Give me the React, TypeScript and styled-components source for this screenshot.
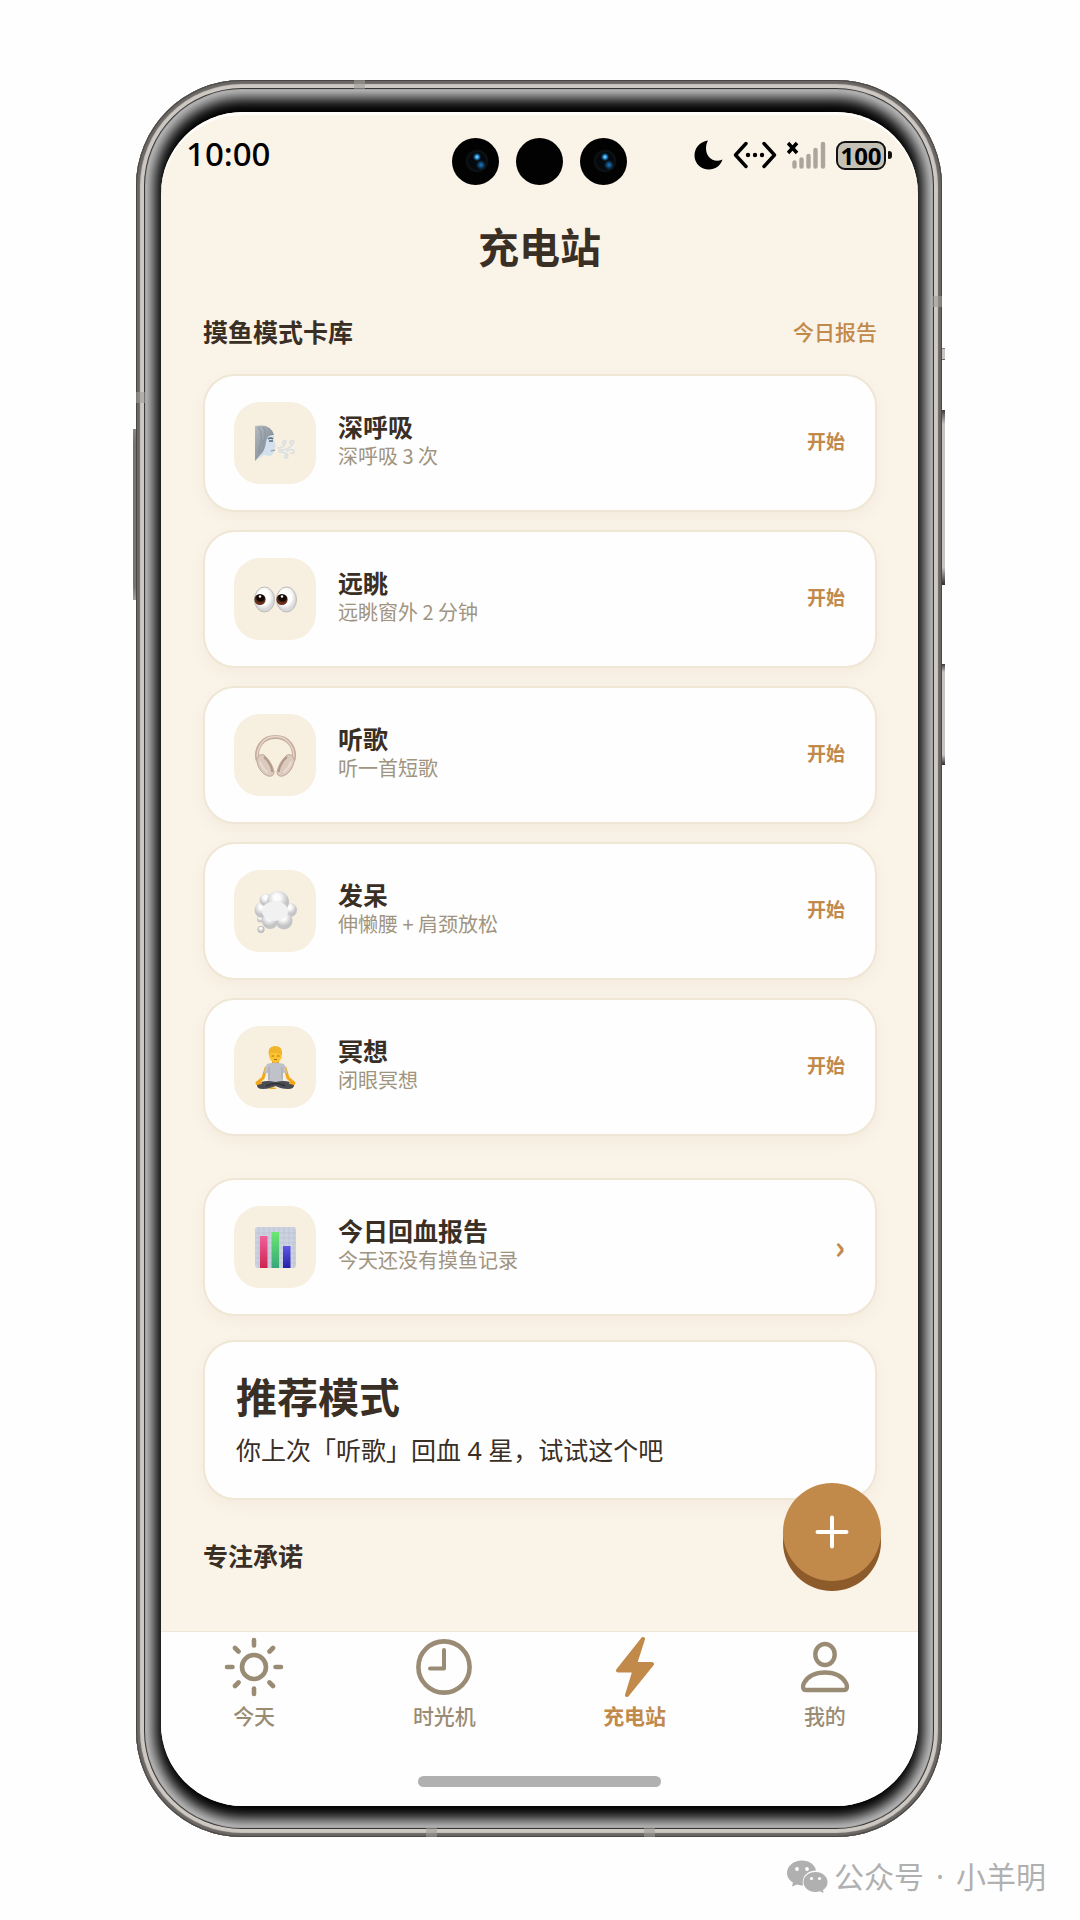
import React from 'react';
import styled, { createGlobalStyle, css } from 'styled-components';

const color = {
  page: '#fefefe',
  paper: '#faf3e8',
  card: '#fefefe',
  line: '#efe6d5',
  tile: '#f7efdf',
  ink: '#3a2f24',
  muted: '#a09480',
  tab: '#9a8c74',
  accent: '#c1894a',
  accentDark: '#8d5a2a',
};

const GlobalStyle = createGlobalStyle`
  *, *::before, *::after { box-sizing: border-box; }
  body {
    margin: 0;
    background: ${color.page};
    color: ${color.ink};
    font-family: "Noto Sans CJK SC", "Noto Sans", sans-serif;
  }
  h1, h2, h3, p, ul { margin: 0; padding: 0; }
  button { border: 0; padding: 0; background: none; font-family: inherit; cursor: pointer; }
  a { color: inherit; text-decoration: none; }
  svg { display: block; flex: none; }
`;

const Stage = styled.div`
  display: flex;
  flex-direction: column;
  padding: 80px 34px 0 0;
`;

const Phone = styled.div`
  position: relative;
  margin: 0 104px 0 136px;
  padding: 32px 24px 31px 25px;
  border-radius: 106px;
  background: #000;
  box-shadow:
    inset 0 0 0 1px #4a4744,
    inset 0 0 1px 4px #6a6663,
    inset 0 0 0 8px #cdc8c2,
    inset 0 0 1px 9px #2b2928,
    inset 0 0 14px 18px #c8c8c8;
`;

const SideKey = styled.i<{ $side: 'left' | 'right'; $top: number; $length: number }>`
  position: absolute;
  top: ${(p) => p.$top}px;
  ${(p) => p.$side}: -3px;
  width: 3px;
  height: ${(p) => p.$length}px;
  background: ${(p) =>
    p.$side === 'left'
      ? 'linear-gradient(#8a8682, #77736f 8% 92%, #a5a09b)'
      : 'linear-gradient(#3d3b3a, #c8c4c0 8% 90%, #2d2b2a)'};
`;

const Antenna = styled.i<{ $x: string; $y: string; $flat?: boolean }>`
  position: absolute;
  left: ${(p) => p.$x};
  top: ${(p) => p.$y};
  width: ${(p) => (p.$flat ? 11 : 9)}px;
  height: ${(p) => (p.$flat ? 9 : 11)}px;
  background: rgba(160, 156, 152, 0.6);
`;

const Screen = styled.div`
  display: flex;
  flex-direction: column;
  overflow: hidden;
  border-radius: 82px;
  background: ${color.paper};
  box-shadow: inset 0 3px 0 #fffdf9;
`;

const StatusBar = styled.header`
  display: grid;
  grid-template-columns: 1fr auto 1fr;
  align-items: center;
  height: 98px;
  padding: 0 26px 0 25px;
`;

const Clock = styled.time`
  padding-bottom: 14px;
  font: 500 33px/40px "Noto Sans", sans-serif;
  color: #000;
`;

const Cameras = styled.div`
  display: flex;
  gap: 17px;
`;

const Lens = styled.i<{ $glass?: boolean }>`
  width: 47px;
  height: 47px;
  border-radius: 50%;
  background: #020202;
  ${(p) =>
    p.$glass &&
    css`
      background:
        radial-gradient(circle at 25px 19px, #6cc4f2 0 1px, #1b78b8 2px, transparent 4px),
        radial-gradient(circle at 29px 27px, #1a6aa8 0 1px, #0a3355 3px, transparent 5px),
        radial-gradient(circle at 25px 23px, #05090e 0 8px, #101214 10px, #020202 12px);
    `}
`;

const StatusIcons = styled.div`
  display: flex;
  justify-content: flex-end;
  align-items: center;
  gap: 10px;
  padding-bottom: 12px;
`;

const BatteryBox = styled.span`
  display: flex;
  align-items: center;
  gap: 2px;
  &::after {
    content: "";
    width: 4px;
    height: 8px;
    border-radius: 1px 3px 3px 1px;
    background: #111;
  }
`;

const BatteryLevel = styled.span`
  width: 50px;
  height: 29px;
  border: 2px solid #111;
  border-radius: 9px;
  background: #c6c1b6;
  color: #000;
  font: 700 24px/25px "Noto Sans", sans-serif;
  text-align: center;
`;

const Title = styled.h1`
  font-size: 41px;
  font-weight: 700;
  line-height: 70px;
  text-align: center;
`;

const Main = styled.main`
  position: relative;
  padding: 31px 41px 56px 42px;
`;

const SectionHead = styled.div`
  display: flex;
  justify-content: space-between;
  align-items: center;
  height: 40px;
`;

const SectionTitle = styled.h2`
  font-size: 25px;
  font-weight: 700;
  line-height: 40px;
`;

const ReportLink = styled.a`
  font-size: 21px;
  font-weight: 500;
  line-height: 40px;
  color: ${color.accent};
`;

const cardFrame = css`
  border: 2px solid ${color.line};
  border-radius: 32px;
  background: ${color.card};
  box-shadow: 0 6px 16px rgba(150, 125, 60, 0.06);
`;

const ModeList = styled.ul`
  display: flex;
  flex-direction: column;
  gap: 18px;
  margin: 23px 0 42px;
  list-style: none;
`;

const Card = styled.div`
  ${cardFrame}
  display: flex;
  align-items: center;
  gap: 22px;
  padding: 26px 30px 26px 29px;
`;

const Tile = styled.span`
  display: grid;
  place-items: center;
  flex: none;
  width: 82px;
  height: 82px;
  border-radius: 26px;
  background: ${color.tile};
`;

const CardText = styled.div`
  flex: 1;
  padding-bottom: 4px;
`;

const CardTitle = styled.h3`
  font-size: 25px;
  font-weight: 700;
  line-height: 30px;
`;

const CardNote = styled.p`
  font-size: 20px;
  line-height: 30px;
  color: ${color.muted};
`;

const StartButton = styled.button`
  padding-bottom: 4px;
  font-size: 19px;
  font-weight: 700;
  line-height: 30px;
  color: ${color.accent};
`;

const MoreButton = styled(StartButton)`
  font-size: 32px;
`;

const Suggestion = styled.section`
  ${cardFrame}
  margin: 24px 0 35px;
  padding: 23px 31px 28px;
`;

const SuggestionTitle = styled.h2`
  margin-bottom: 5px;
  font-size: 41px;
  font-weight: 700;
  line-height: 60px;
`;

const SuggestionText = styled.p`
  font-family: "Noto Sans", "Noto Sans CJK SC", sans-serif;
  font-size: 25px;
  line-height: 40px;
`;

const AddButton = styled.button`
  position: absolute;
  right: 37px;
  bottom: 50px;
  display: grid;
  place-items: center;
  width: 98px;
  height: 98px;
  border-radius: 50%;
  background: ${color.accent};
  box-shadow: 0 10px 0 ${color.accentDark};
`;

const Footer = styled.footer`
  padding-bottom: 19px;
  border-top: 1px solid ${color.line};
  background: ${color.card};
`;

const TabBar = styled.nav`
  display: grid;
  grid-template-columns: repeat(4, 1fr);
  margin: 0 -2px;
  padding-top: 5px;
`;

const Tab = styled.button<{ $active?: boolean }>`
  display: flex;
  flex-direction: column;
  align-items: center;
  gap: 3px;
  color: ${(p) => (p.$active ? color.accent : color.tab)};
  font-size: 21px;
  font-weight: ${(p) => (p.$active ? 700 : 500)};
  line-height: 30px;
`;

const HomeBar = styled.div`
  width: 32%;
  height: 11px;
  margin: 46px auto 0;
  border-radius: 6px;
  background: #b0b0b0;
`;

const Signature = styled.div`
  display: flex;
  align-items: center;
  align-self: flex-end;
  gap: 6px;
  margin-top: 20px;
  color: #b0b0b0;
`;

const SignatureText = styled.p`
  display: flex;
  gap: 12px;
  font: 400 30px/40px "Noto Sans", "Noto Sans CJK SC", sans-serif;
`;

const Moon = () => (
  <svg width="29" height="30" viewBox="0 0 29 30" aria-hidden="true">
    <path d="M14 0.5C5 2 0.5 8.500.5 15.500C.5 23.500 7 29.500 15 29.500C21 29.500 26.500 26 28.500 19.500C23 22 18 20.500 15 17C11.500 13 11 6 14 .5Z" fill="#000" />
  </svg>
);

const Link = () => (
  <svg width="44" height="28" viewBox="0 0 44 28" fill="none" stroke="#000" strokeWidth="3.400" strokeLinecap="round" strokeLinejoin="round" aria-hidden="true">
    <path d="M13 2.500 2.500 14 13 25.500M31 2.500 41.500 14 31 25.500" />
    <g fill="#000" stroke="none">
      <circle cx="15" cy="14" r="2.200" />
      <circle cx="22" cy="14" r="2.200" />
      <circle cx="29" cy="14" r="2.200" />
    </g>
  </svg>
);

const Signal = () => (
  <svg width="39" height="28" viewBox="0 0 39 28" fill="none" strokeLinecap="round" aria-hidden="true">
    <path d="M1 2 10 12M10 2 1 12" stroke="#000" strokeWidth="3.600" strokeLinecap="butt" />
    <path d="M7.500 21.500V25.500M14.500 18.500V25.500M21.500 15V25.500M28.500 9V25.500M36 3V25.500" stroke="#aaa59d" strokeWidth="4.400" />
  </svg>
);

const BreathIcon = () => (
  <svg width="43" height="43" viewBox="0 0 43 43" aria-hidden="true">
    <defs>
      <linearGradient id="hair" x1="0" y1="0" x2="1" y2="1">
        <stop offset="0" stopColor="#b6bcc2" />
        <stop offset="1" stopColor="#6f7a84" />
      </linearGradient>
    </defs>
    <path d="M2 9Q9 3 16 8Q21 12 20 18L22 24L20 26Q21 32 16 34L10 33L2 38Z" fill="#d3e0ed" />
    <path d="M1 4Q17 1 20 13Q13 12 12 20Q11 29 6 33L1 39Z" fill="url(#hair)" />
    <path d="M4 5Q11 13 4 31M9 5Q14 11 8 23" fill="none" stroke="#8b959e" strokeWidth="1" />
    <path d="M14 17Q17 15 19 17M15 19H19" fill="none" stroke="#53677c" strokeWidth="1.400" />
    <path d="M17 29 21 28" stroke="#9aabba" strokeWidth="1.500" />
    <g fill="none" stroke="#d9dfe1" strokeWidth="1.600" strokeLinecap="round">
      <path d="M24 26Q29 26 31 22Q33 18 30 19Q27 21 30 23" />
      <path d="M25 28Q33 29 38 23Q42 18 37 19Q34 21 38 22" />
      <path d="M25 30Q30 30 33 32Q35 35 32 36Q29 35 32 33" />
      <path d="M33 29Q38 26 40 29Q40 32 37 31" />
    </g>
  </svg>
);

const EyesIcon = () => (
  <svg width="43" height="43" viewBox="0 0 43 43" aria-hidden="true">
    <defs>
      <radialGradient id="eyeball" cx=".45" cy=".4">
        <stop offset=".6" stopColor="#fff" />
        <stop offset="1" stopColor="#d8d8da" />
      </radialGradient>
      <radialGradient id="iris" cx=".55" cy=".3">
        <stop offset=".65" stopColor="#120a07" />
        <stop offset="1" stopColor="#6a301b" />
      </radialGradient>
    </defs>
    {[0, 22].map((x) => (
      <g key={x} transform={`translate(${x} 0)`}>
        <ellipse cx="10.500" cy="21.500" rx="10" ry="12.500" fill="url(#eyeball)" stroke="#bdbbb9" strokeWidth="1" />
        <circle cx="6" cy="21.500" r="5.600" fill="url(#iris)" />
        <circle cx="6" cy="18.500" r="1.200" fill="#fff" />
      </g>
    ))}
  </svg>
);

const HeadphonesIcon = () => (
  <svg width="43" height="43" viewBox="0 0 43 43" fill="none" aria-hidden="true">
    <path d="M3.500 26C1 13 9 3 21.500 3S42 13 39.500 26" stroke="#c4ac9e" strokeWidth="4" />
    <path d="M3.500 25C2 14 9 2.500 21.500 2.500S41 14 39.500 25" stroke="#e6d6cc" strokeWidth="1.400" />
    <g fill="#dccabf" stroke="#bfa899" strokeWidth="1">
      <path d="M2.500 26Q5 19 10 21Q18 28 20 38Q20 43 14 42Q5 39 2.500 26Z" />
      <path d="M40.500 26Q38 19 33 21Q25 28 23 38Q23 43 29 42Q38 39 40.500 26Z" />
    </g>
    <path d="M10 23Q17 29 18.500 38M33 23Q26 29 24.500 38" stroke="#b19889" strokeWidth="2" />
    <path d="M6 28Q8 34 13 38M37 28Q35 34 30 38" stroke="#e9dbd1" strokeWidth="2" strokeLinecap="round" />
  </svg>
);

const CloudIcon = () => (
  <svg width="43" height="43" viewBox="0 0 43 43" aria-hidden="true">
    <defs>
      <radialGradient id="puff" cx=".45" cy=".3">
        <stop offset=".3" stopColor="#fcfcfc" />
        <stop offset="1" stopColor="#c4c4c6" />
      </radialGradient>
    </defs>
    <g fill="url(#puff)">
      <circle cx="7" cy="39.500" r="3.200" stroke="#b5b5b5" strokeWidth=".8" />
      <circle cx="6.500" cy="29" r="3.500" />
      <circle cx="8.500" cy="20" r="8" />
      <circle cx="12" cy="10" r="6.500" />
      <circle cx="36" cy="20" r="7" />
      <circle cx="30" cy="31" r="8.500" />
      <circle cx="16" cy="31" r="8" />
      <circle cx="24" cy="12" r="11" />
    </g>
    <ellipse cx="21" cy="21" rx="13" ry="10" fill="#f1f1f1" />
  </svg>
);

const MeditateIcon = () => (
  <svg width="43" height="43" viewBox="0 0 43 43" aria-hidden="true">
    <path d="M12 22 9 32 3 37M31 22 34 32 40 37" fill="none" stroke="#f2a81d" strokeWidth="3" strokeLinecap="round" strokeLinejoin="round" />
    <path d="M18 12H25V19H18Z" fill="#e89a17" />
    <path d="M13 18Q21 15 30 18Q32 21 33 27L29 27V36H14V27L10 27Q11 21 13 18Z" fill="#bfc2c8" />
    <path d="M15 21V34M28 21V33" stroke="#a6a9b0" strokeWidth="1" />
    <path d="M3 38Q10 33 21.500 36Q33 33 40 38Q41 43 34 43Q27 43 21.500 40Q16 43 9 43Q2 43 3 38Z" fill="#4b4c52" />
    <path d="M12 40Q22 35 31 40" fill="none" stroke="#2f3035" strokeWidth="1.500" />
    <path d="M3 38 7 37M40 38 36 37M17 42.500H21" stroke="#f2a81d" strokeWidth="2.200" strokeLinecap="round" />
    <ellipse cx="21.500" cy="9" rx="6.500" ry="7.500" fill="#fcc42f" />
    <path d="M15 10Q13 0 21 0Q29 0 28 9Q25 7 22 7Q16 6 15 10Z" fill="#f0b52b" />
    <path d="M17.500 10H20M23 10H25.500M20 13.500H23" stroke="#a66a12" strokeWidth="1" />
  </svg>
);

const ChartIcon = () => (
  <svg width="43" height="43" viewBox="0 0 43 43" aria-hidden="true">
    <defs>
      <linearGradient id="red" x2="0" y2="1"><stop stopColor="#f0609a" /><stop offset="1" stopColor="#cf2450" /></linearGradient>
      <linearGradient id="green" x2="0" y2="1"><stop stopColor="#6ae873" /><stop offset="1" stopColor="#35a878" /></linearGradient>
      <linearGradient id="blue" x2="0" y2="1"><stop stopColor="#5c58e6" /><stop offset="1" stopColor="#2420a8" /></linearGradient>
    </defs>
    <rect x="1" y="1" width="41" height="41" rx="3" fill="#ccd2df" />
    <path d="M5 1V42M10 1V42M15 1V42M20 1V42M25 1V42M30 1V42M35 1V42M40 1V42M1 7H42M1 12H42M1 17H42M1 22H42M1 27H42M1 32H42M1 37H42" stroke="#b9c1d1" strokeWidth=".7" />
    <rect x="6" y="10" width="7.500" height="32" fill="url(#red)" />
    <rect x="17.500" y="6" width="7.500" height="36" fill="url(#green)" />
    <rect x="29" y="20" width="7.500" height="22" fill="url(#blue)" />
  </svg>
);

const SunIcon = () => (
  <svg width="60" height="60" viewBox="0 0 60 60" fill="none" stroke="currentColor" strokeWidth="4.600" strokeLinecap="round" aria-hidden="true">
    <circle cx="30" cy="30" r="12" />
    <path d="M30 3V8.500M30 51.500V57M3 30H8.500M51.500 30H57M11 11 14.500 14.500M45.500 45.500 49 49M49 11 45.500 14.500M14.500 45.500 11 49" />
  </svg>
);

const ClockIcon = () => (
  <svg width="60" height="60" viewBox="0 0 60 60" fill="none" stroke="currentColor" strokeWidth="4.600" strokeLinecap="round" strokeLinejoin="round" aria-hidden="true">
    <circle cx="30" cy="30" r="25.600" />
    <path d="M30 13V31.500H16" strokeWidth="4" />
  </svg>
);

const BoltIcon = () => (
  <svg width="60" height="60" viewBox="0 0 60 60" fill="currentColor" stroke="currentColor" strokeWidth="4" strokeLinejoin="round" aria-hidden="true">
    <path d="M38 2 13 33.500H29.500L22 58 47 27H30Z" />
  </svg>
);

const PersonIcon = () => (
  <svg width="60" height="60" viewBox="0 0 60 60" fill="none" stroke="currentColor" strokeWidth="4.400" strokeLinejoin="round" aria-hidden="true">
    <ellipse cx="30" cy="17.500" rx="9.700" ry="10.500" />
    <path d="M11 53C7.500 53 7.500 49 9 46C13 39 21 35.500 30 35.500S47 39 51 46C52.500 49 52.500 53 49 53Z" />
  </svg>
);

const PlusIcon = () => (
  <svg width="34" height="34" viewBox="0 0 34 34" stroke="#fff" strokeWidth="4" strokeLinecap="round" aria-hidden="true">
    <path d="M17 2.500V31.500M2.500 17H31.500" />
  </svg>
);

const ChatLogo = () => (
  <svg width="41" height="34" viewBox="0 0 41 34" fill="#b0b0b0" aria-hidden="true">
    <path d="M15 0.500C6.500.5 0 6 0 13C0 17 2.500 20.500 6 22.500L5 26.500L10 24.500Q13 25.500 16 25.500C14 16 21 10.500 29 10.500C28 4.500 22 .5 15 .5Z" />
    <path d="M28.500 12C21.500 12 16.500 16.500 16.500 22S21.500 32 28.500 32Q31 32 33 31.300L36.500 33L36 30C39 28 40.500 25.500 40.500 22C40.500 16.500 35.500 12 28.500 12Z" />
    <g fill="#fefefe">
      <circle cx="10" cy="9" r="1.900" />
      <circle cx="20" cy="9" r="1.900" />
      <circle cx="24.500" cy="18.500" r="1.600" />
      <circle cx="32.500" cy="18.500" r="1.600" />
    </g>
  </svg>
);

const modes = [
  { title: '深呼吸', note: '深呼吸 3 次', Icon: BreathIcon },
  { title: '远眺', note: '远眺窗外 2 分钟', Icon: EyesIcon },
  { title: '听歌', note: '听一首短歌', Icon: HeadphonesIcon },
  { title: '发呆', note: '伸懒腰 + 肩颈放松', Icon: CloudIcon },
  { title: '冥想', note: '闭眼冥想', Icon: MeditateIcon },
];

const tabs = [
  { label: '今天', Icon: SunIcon },
  { label: '时光机', Icon: ClockIcon },
  { label: '充电站', Icon: BoltIcon },
  { label: '我的', Icon: PersonIcon },
];

export default function App() {
  const [active, setActive] = React.useState('充电站');
  return (
    <>
      <GlobalStyle />
      <Stage>
        <Phone>
          <SideKey $side="left" $top={349} $length={171} />
          <SideKey $side="right" $top={268} $length={12} />
          <SideKey $side="right" $top={330} $length={175} />
          <SideKey $side="right" $top={584} $length={101} />
          <Antenna $x="27%" $y="0" $flat />
          <Antenna $x="0" $y="312px" />
          <Antenna $x="calc(100% - 9px)" $y="216px" />
          <Antenna $x="36%" $y="calc(100% - 9px)" $flat />
          <Antenna $x="63%" $y="calc(100% - 9px)" $flat />
          <Screen>
            <StatusBar>
              <Clock>10:00</Clock>
              <Cameras>
                <Lens $glass />
                <Lens />
                <Lens $glass />
              </Cameras>
              <StatusIcons>
                <Moon />
                <Link />
                <Signal />
                <BatteryBox>
                  <BatteryLevel>100</BatteryLevel>
                </BatteryBox>
              </StatusIcons>
            </StatusBar>
            <Title>充电站</Title>
            <Main>
              <SectionHead>
                <SectionTitle>摸鱼模式卡库</SectionTitle>
                <ReportLink href="#report">今日报告</ReportLink>
              </SectionHead>
              <ModeList>
                {modes.map(({ title, note, Icon }) => (
                  <Card as="li" key={title}>
                    <Tile><Icon /></Tile>
                    <CardText>
                      <CardTitle>{title}</CardTitle>
                      <CardNote>{note}</CardNote>
                    </CardText>
                    <StartButton type="button">开始</StartButton>
                  </Card>
                ))}
              </ModeList>
              <Card id="report">
                <Tile><ChartIcon /></Tile>
                <CardText>
                  <CardTitle>今日回血报告</CardTitle>
                  <CardNote>今天还没有摸鱼记录</CardNote>
                </CardText>
                <MoreButton type="button">›</MoreButton>
              </Card>
              <Suggestion>
                <SuggestionTitle>推荐模式</SuggestionTitle>
                <SuggestionText>你上次「听歌」回血 4 星，试试这个吧</SuggestionText>
              </Suggestion>
              <SectionTitle>专注承诺</SectionTitle>
              <AddButton type="button" aria-label="添加"><PlusIcon /></AddButton>
            </Main>
            <Footer>
              <TabBar>
                {tabs.map(({ label, Icon }) => (
                  <Tab key={label} type="button" $active={label === active} onClick={() => setActive(label)}>
                    <Icon />
                    {label}
                  </Tab>
                ))}
              </TabBar>
              <HomeBar />
            </Footer>
          </Screen>
        </Phone>
        <Signature>
          <ChatLogo />
          <SignatureText>
            <span>公众号</span>
            <span>·</span>
            <span>小羊明</span>
          </SignatureText>
        </Signature>
      </Stage>
    </>
  );
}
